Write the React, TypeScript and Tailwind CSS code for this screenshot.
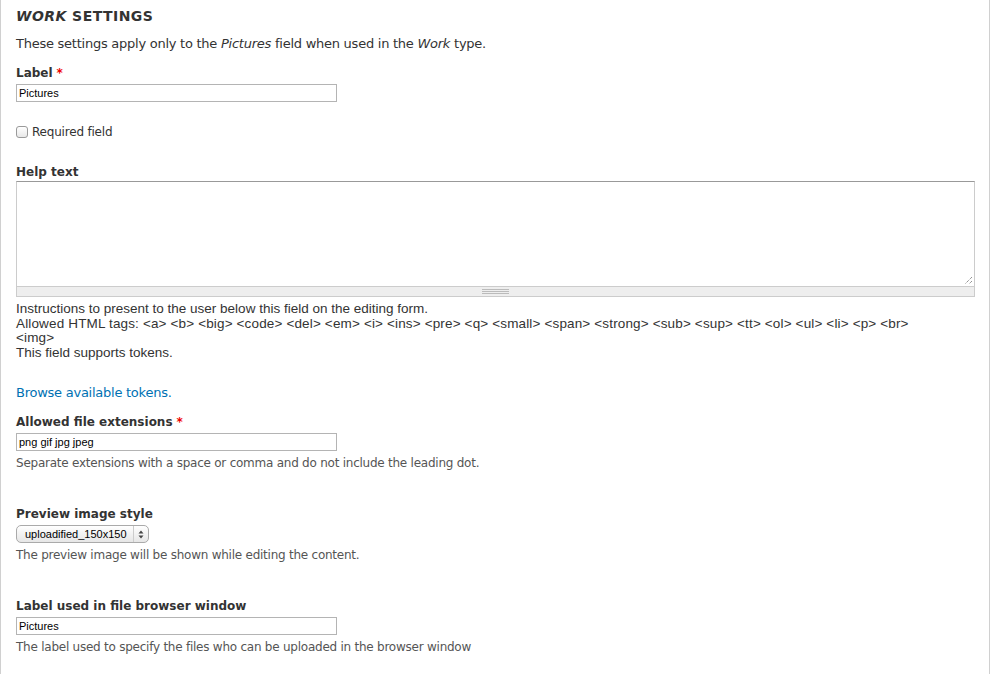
const main = "font-['DejaVu_Sans',sans-serif]";
const narrow = "font-['Liberation_Sans',Arial,sans-serif]";

function Req() {
  return <span className="text-[#e00] ml-1">*</span>;
}

function TextField({ value }: { value: string }) {
  return (
    <div
      className={`w-[321px] h-[18px] border border-[#b4b4b4] bg-white px-[2px] text-[11px] leading-[16px] text-black ${narrow}`}
    >
      {value}
    </div>
  );
}

function Label({ children, className = "mb-[3px]" }: { children: React.ReactNode; className?: string }) {
  return <div className={`text-[12px] font-bold text-[#333] leading-[16px] ${className}`}>{children}</div>;
}

function Desc({ children }: { children: React.ReactNode }) {
  return <p className="mt-[4px] text-[12px] text-[#555] leading-[16px] tracking-[-0.24px]">{children}</p>;
}

export default function App() {
  return (
    <div className={`min-h-[674px] w-[990px] bg-white border-l border-r border-[#d0d0d0] ${main}`}>
      <div className="pl-[15px] pt-[8px]">
        <h2 className="text-[14px] font-bold text-[#333] leading-[16px] uppercase tracking-[0.45px]">
          <em>Work</em> settings
        </h2>
        <p className="mt-[12px] text-[13px] text-[#333] leading-[16px] tracking-[-0.25px]">
          These settings apply only to the <em>Pictures</em> field when used in the <em>Work</em> type.
        </p>

        <div className="mt-[13px]">
          <Label>
            Label<Req />
          </Label>
          <TextField value="Pictures" />
        </div>

        <label className="mt-[22px] flex items-center gap-[4px] text-[12px] text-[#333] leading-[16px] tracking-[-0.2px]">
          <span className="w-[12px] h-[12px] rounded-[3px] border border-[#9a9a9a] bg-gradient-to-b from-white to-[#e8e8e8]" />
          Required field
        </label>

        <div className="mt-[24px] pr-[14px]">
          <Label className="mb-[1px]">Help text</Label>
          <div className="relative h-[106px] border border-[#ccc] border-t-[#999] bg-white">
            <svg className="absolute right-[1px] bottom-[1px]" width="9" height="9" viewBox="0 0 9 9">
              <path d="M8 1L1 8M8 5L5 8" stroke="#666" strokeWidth="1" strokeDasharray="1 1" />
            </svg>
          </div>
          <div className="h-[10px] border border-t-0 border-[#ccc] bg-[#eee] flex items-center justify-center">
            <div className="w-[27px] h-[5px] border-t border-b border-[#bbb] flex items-center">
              <div className="w-full h-px bg-[#bbb]" />
            </div>
          </div>
        </div>

        <div className={`mt-[5px] text-[13.5px] text-[#333] leading-[14.5px] ${narrow}`}>
          <div>Instructions to present to the user below this field on the editing form.</div>
          <div className="tracking-[0.15px]">
            Allowed HTML tags: &lt;a&gt; &lt;b&gt; &lt;big&gt; &lt;code&gt; &lt;del&gt; &lt;em&gt; &lt;i&gt; &lt;ins&gt; &lt;pre&gt; &lt;q&gt;
            &lt;small&gt; &lt;span&gt; &lt;strong&gt; &lt;sub&gt; &lt;sup&gt; &lt;tt&gt; &lt;ol&gt; &lt;ul&gt; &lt;li&gt; &lt;p&gt; &lt;br&gt;
            <br />
            &lt;img&gt;
          </div>
          <div>This field supports tokens.</div>
        </div>

        <a href="#" className="block mt-[25px] text-[13px] text-[#0071b3] leading-[16px] tracking-[-0.25px]">
          Browse available tokens.
        </a>

        <div className="mt-[13px]">
          <Label>
            Allowed file extensions<Req />
          </Label>
          <TextField value="png gif jpg jpeg" />
          <Desc>Separate extensions with a space or comma and do not include the leading dot.</Desc>
        </div>

        <div className="mt-[35px]">
          <Label>Preview image style</Label>
          <div
            className={`w-[133px] h-[18px] flex items-center rounded-[5px] border border-[#aaa] bg-gradient-to-b from-white to-[#e6e6e6] text-[11px] text-black ${narrow}`}
          >
            <span className="flex-1 pl-[8px] leading-[15px]">uploadified_150x150</span>
            <span className="w-[15px] h-full border-l border-[#ccc] flex items-center justify-center">
              <svg width="6" height="9" viewBox="0 0 6 9">
                <path d="M3 0.5L5.5 3.5H0.5Z M3 8.5L0.5 5.5H5.5Z" fill="#444" />
              </svg>
            </span>
          </div>
          <Desc>The preview image will be shown while editing the content.</Desc>
        </div>

        <div className="mt-[35px]">
          <Label>Label used in file browser window</Label>
          <TextField value="Pictures" />
          <Desc>The label used to specify the files who can be uploaded in the browser window</Desc>
        </div>
      </div>
    </div>
  );
}
